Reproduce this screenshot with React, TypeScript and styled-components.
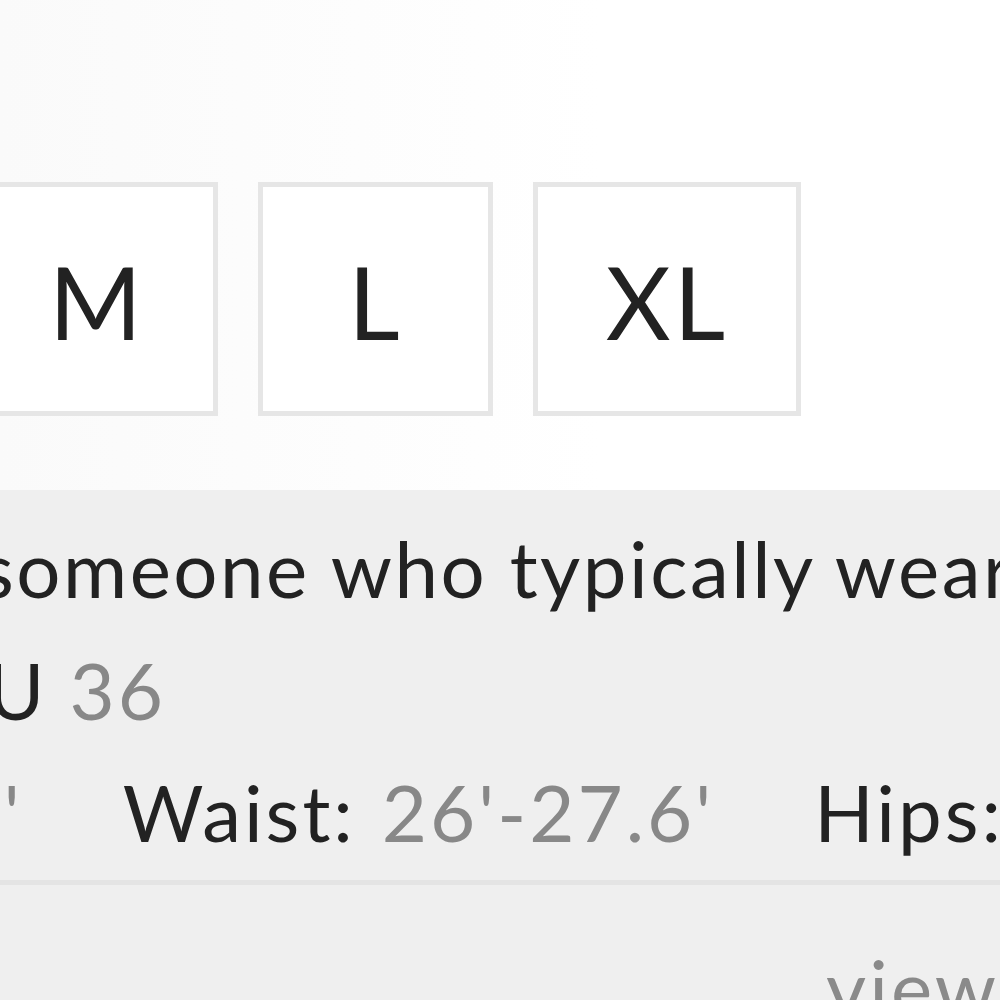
import * as React from 'react';
import styled, { createGlobalStyle } from 'styled-components';

const GlobalStyle = createGlobalStyle`
  html, body {
    margin: 0;
    padding: 0;
    background: #ffffff;
    overflow: hidden;
  }
  body {
    font-family: Lato, "Open Sans", "Liberation Sans", sans-serif;
    color: #222222;
  }
`;

const Page = styled.div`
  width: 1000px;
  height: 1000px;
  overflow: hidden;
  display: flex;
  flex-direction: column;
  background: linear-gradient(90deg, #fafafa 0%, #ffffff 60%);
`;

const SizeRow = styled.div`
  display: flex;
  gap: 40px;
  margin: 182px 0 0 -24px;
`;

const SizeBox = styled.button`
  box-sizing: border-box;
  height: 234px;
  min-width: 235px;
  padding: 4px 68px 0;
  border: 5px solid #e6e6e6;
  background: #ffffff;
  font-family: Lato, "Liberation Sans", sans-serif;
  font-size: 100px;
  font-weight: 400;
  letter-spacing: 3px;
  color: #222222;
  display: flex;
  align-items: center;
  justify-content: center;
  flex-shrink: 0;
  line-height: 1;
`;

const Details = styled.section`
  margin-top: 74px;
  background: #efefef;
  flex: 1;
  display: flex;
  flex-direction: column;
  padding-top: 17px;
`;

const Line = styled.div<{ $shift: number; $tracking?: number }>`
  display: flex;
  align-items: baseline;
  white-space: nowrap;
  font-size: 78px;
  line-height: 122px;
  letter-spacing: ${(p) => p.$tracking ?? 3}px;
  margin-left: ${(p) => p.$shift}px;
`;

const Field = styled.span<{ $gap?: number }>`
  display: inline-flex;
  gap: ${(p) => p.$gap ?? 26}px;
  flex-shrink: 0;
  margin-right: 100px;
`;

const Label = styled.span`
  color: #222222;
`;

const Value = styled.span`
  color: #888888;
`;

const Divider = styled.hr`
  margin: 7px 0 0;
  border: none;
  height: 5px;
  background: #e4e4e4;
`;

const LinkRow = styled.div`
  margin-top: 41px;
  padding-left: 826px;
  font-size: 78px;
  line-height: 122px;
  letter-spacing: 3px;
  white-space: nowrap;
  color: #8a8a8a;
`;

const sizes = ['M', 'L', 'XL'];

const App: React.FC = () => {
  const [picked, setPicked] = React.useState<string | null>(null);

  return (
    <>
      <GlobalStyle />
      <Page>
        <SizeRow>
          {sizes.map((s) => (
            <SizeBox key={s} onClick={() => setPicked(s)} aria-pressed={picked === s}>
              {s}
            </SizeBox>
          ))}
        </SizeRow>
        <Details>
          <Line $shift={-20} $tracking={2.5}>
            someone who typically wears S
          </Line>
          <Line $shift={-61}>
            <Field $gap={22}>
              <Label>EU</Label>
              <Value>36</Value>
            </Field>
          </Line>
          <Line $shift={-525}>
            <Field>
              <Label>Bust:</Label>
              <Value>32'-33.6'</Value>
            </Field>
            <Field>
              <Label>Waist:</Label>
              <Value>26'-27.6'</Value>
            </Field>
            <Field>
              <Label>Hips:</Label>
              <Value>35'-36.6'</Value>
            </Field>
          </Line>
          <Divider />
          <LinkRow>view size chart</LinkRow>
        </Details>
      </Page>
    </>
  );
};

export default App;
